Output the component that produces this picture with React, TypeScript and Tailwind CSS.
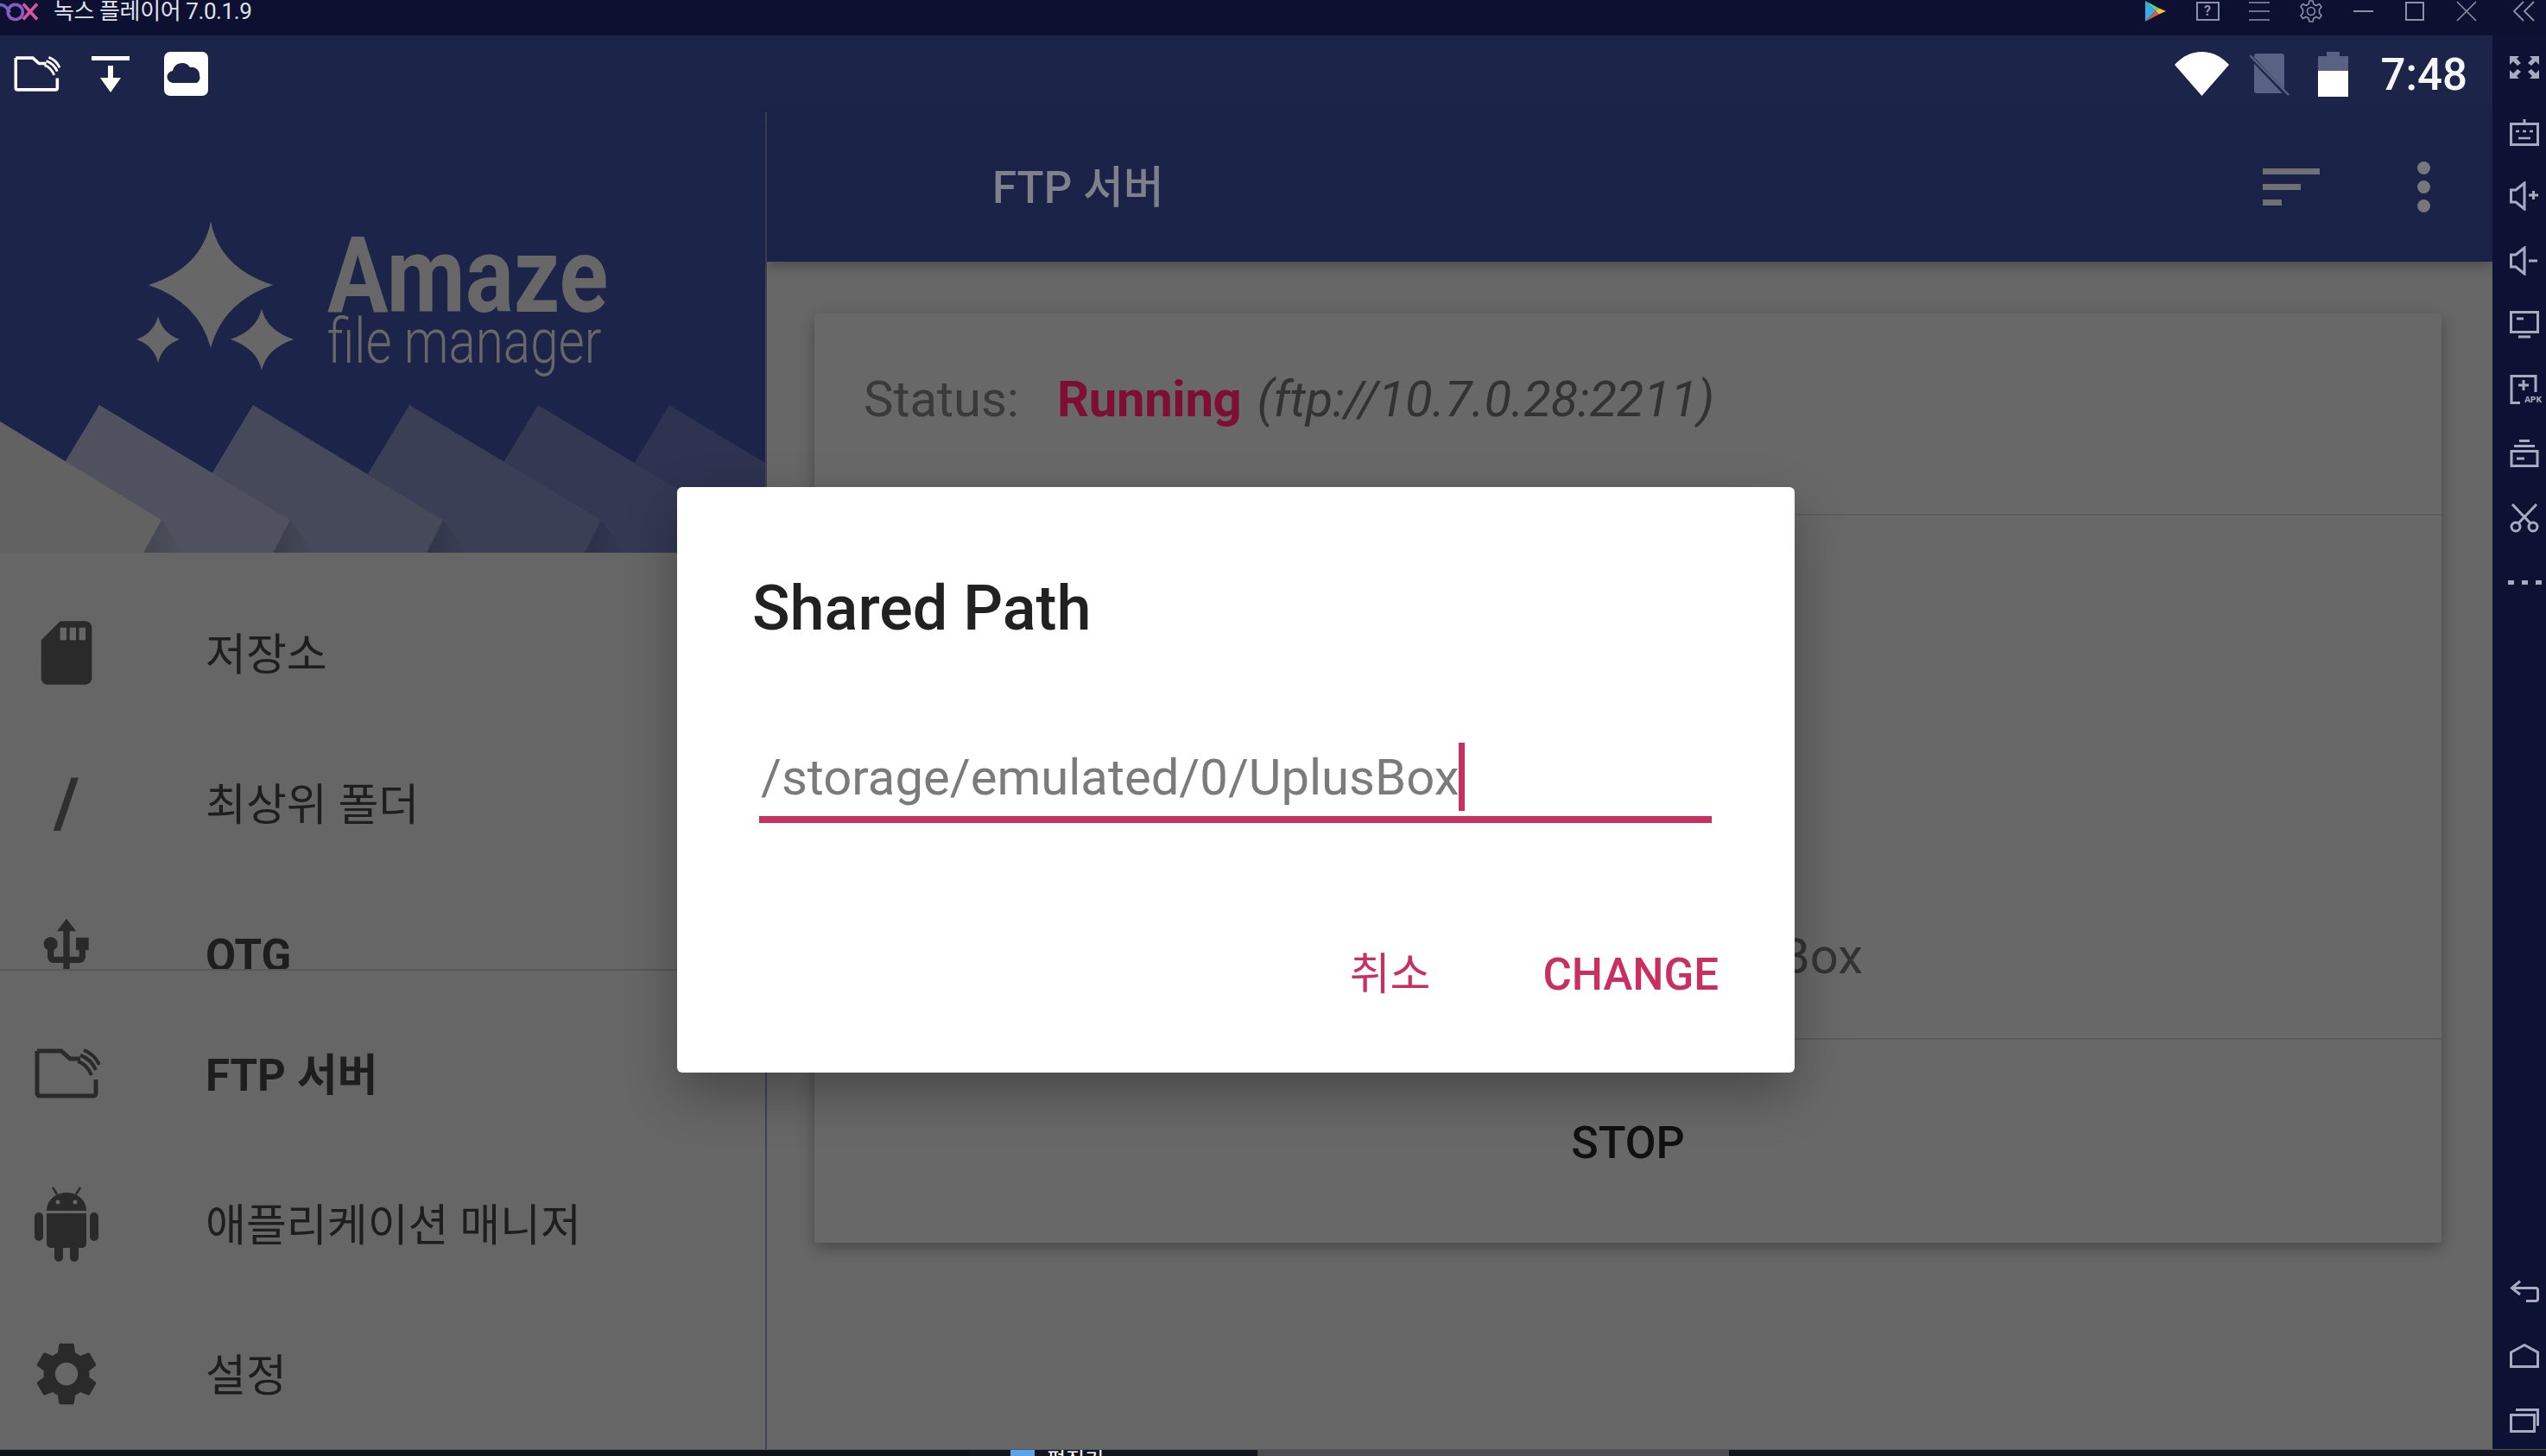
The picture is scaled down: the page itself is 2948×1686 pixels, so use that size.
import React from "react";
import { MdSdStorage, MdUsb, MdSettings } from "react-icons/md";

const FtpFolder = ({ cls, sw }: { cls: string; sw: number }) => (
  <svg viewBox="0 0 76 58" className={cls} fill="none" stroke="currentColor" strokeWidth={sw} strokeLinejoin="round" strokeLinecap="butt">
    <path d="M3 3 H31 L41 12 H53 M3 3 V52 a3 3 0 0 0 3 3 H68 a3 3 0 0 0 3 -3 V36" />
    <path d="M57 2 C65 5 71 10 75 19" strokeWidth={sw * 0.8} />
    <path d="M53 8 C62 11 67 16 71 25" strokeWidth={sw * 0.8} />
    <path d="M50 15 C57 17 62 22 66 31" strokeWidth={sw * 0.8} />
  </svg>
);

const Tb = ({ children }: { children: React.ReactNode }) => (
  <div className="w-[60px] h-full flex items-center justify-center text-[#8d90a6]">{children}</div>
);

const Side = ({ children }: { children: React.ReactNode }) => (
  <div className="h-[74.5px] flex items-center justify-center text-[#a8abbf]">{children}</div>
);

const Item = ({ icon, label, bold }: { icon: React.ReactNode; label: string; bold?: boolean }) => (
  <div className="h-[174px] flex items-center shrink-0">
    <div className="w-[154px] flex items-center justify-center text-[#2a2a2a]">{icon}</div>
    <div className={`ml-[84px] text-[#1e1e1e] text-[51px] leading-[60px] pt-[5px] ${bold ? "font-bold" : "font-normal"}`}>{label}</div>
  </div>
);

export default function App() {
  return (
    <div className="relative w-[2948px] h-[1686px] overflow-hidden flex flex-col bg-[#0c1133] font-['Roboto','Noto_Sans_CJK_KR',sans-serif]">
      {/* window title bar */}
      <div className="h-[41px] shrink-0 bg-[#0d1030] flex items-start justify-between">
        <div className="flex items-center h-[27px]">
          <svg viewBox="0 0 50 30" className="w-[50px] h-[27px]" fill="none" strokeWidth="4">
            <path d="M-6 7 C2 4 6 10 10 16" stroke="#6d5fc0" />
            <path d="M17 6 a9.5 9.5 0 1 1 -0.1 0" stroke="#8a5cc0" />
            <path d="M27 5 L45 25 M45 5 L27 25" stroke="#d9569e" />
          </svg>
          <span className="ml-[12px] text-[#dfe1ea] text-[26px] leading-[27px] whitespace-nowrap tracking-[-0.4px]">녹스 플레이어 7.0.1.9</span>
        </div>
        <div className="flex items-center h-[26px]">
          <Tb>
            <svg viewBox="0 0 26 26" className="w-[26px] h-[26px]">
              <path d="M1 1 L13 13 L1 25 Z" fill="#39a9e8" />
              <path d="M1 1 L17 9.5 L13 13 Z" fill="#5bd08a" />
              <path d="M1 25 L17 16.5 L13 13 Z" fill="#e2574c" />
              <path d="M17 9.5 L25 13 L17 16.5 L13 13 Z" fill="#f4c430" />
            </svg>
          </Tb>
          <Tb>
            <div className="w-[27px] h-[22px] border-2 border-[#8d90a6] flex items-center justify-center text-[16px] leading-none font-bold">?</div>
          </Tb>
          <Tb>
            <svg viewBox="0 0 24 24" className="w-[24px] h-[24px]" stroke="currentColor" strokeWidth="1.6"><path d="M0 2 H24 M0 12 H24 M0 22 H24" /></svg>
          </Tb>
          <Tb>
            <svg viewBox="0 0 26 26" className="w-[26px] h-[26px]" fill="none" stroke="currentColor" strokeWidth="1.6" strokeLinejoin="round">
              <path d="M11 1 H15 L16 5 L19 6.5 L22.5 4.5 L25 8 L22.5 11 V15 L25 18 L22.5 21.5 L19 19.5 L16 21 L15 25 H11 L10 21 L7 19.5 L3.5 21.5 L1 18 L3.5 15 V11 L1 8 L3.5 4.5 L7 6.5 L10 5 Z" />
              <circle cx="13" cy="13" r="4.5" />
            </svg>
          </Tb>
          <Tb><div className="w-[23px] h-[2px] bg-[#8d90a6]" /></Tb>
          <Tb><div className="w-[22px] h-[22px] border-2 border-[#8d90a6]" /></Tb>
          <Tb>
            <svg viewBox="0 0 24 24" className="w-[24px] h-[24px]" stroke="currentColor" strokeWidth="1.6"><path d="M1 1 L23 23 M23 1 L1 23" /></svg>
          </Tb>
          <div className="w-[62px] h-full flex items-center justify-center pl-[10px] text-[#8d90a6]">
            <svg viewBox="0 0 26 24" className="w-[26px] h-[24px]" fill="none" stroke="currentColor" strokeWidth="1.8"><path d="M13 1 L2 12 L13 23 M25 1 L14 12 L25 23" /></svg>
          </div>
        </div>
      </div>

      <div className="flex flex-1 min-h-0">
        {/* android screen */}
        <div className="w-[2886px] shrink-0 flex flex-col">
          {/* status bar */}
          <div className="h-[89px] shrink-0 bg-[#1c2449] flex items-center justify-between pl-[16px] pr-[29px]">
            <div className="flex items-center">
              <FtpFolder cls="w-[54px] h-[41px] text-white" sw={5} />
              <svg viewBox="0 0 44 42" className="ml-[36px] w-[44px] h-[42px] text-white" fill="currentColor">
                <path d="M0 0 H44 V5 H0 Z M19 11 H25 V25 H34 L22 42 L10 25 H19 Z" />
              </svg>
              <svg viewBox="0 0 51 51" className="ml-[40px] w-[51px] h-[51px]">
                <rect width="51" height="51" rx="7" fill="#fff" />
                <path d="M11 36 a7 7 0 0 1 -1 -14 a11 11 0 0 1 20 -4 a9 9 0 0 1 11 9 a8 8 0 0 1 -3 9 Z" fill="#1c2449" />
              </svg>
            </div>
            <div className="flex items-center">
              <svg viewBox="0 0 63 51" className="w-[63px] h-[51px]"><path d="M0 15 C18 -5 45 -5 63 15 L31.5 51 Z" fill="#fff" /></svg>
              <svg viewBox="0 0 46 50" className="ml-[24px] w-[46px] h-[50px]">
                <path d="M5 3 a3 3 0 0 1 3 -2 H37 a3 3 0 0 1 3 3 V44 a3 3 0 0 1 -3 3 H8 a3 3 0 0 1 -3 -3 Z" fill="#5a6283" />
                <path d="M1 5 L43 49" stroke="#1c2449" strokeWidth="5" />
                <path d="M0 3 L45 49" stroke="#5a6283" strokeWidth="2.5" />
              </svg>
              <svg viewBox="0 0 35 52" className="ml-[33px] w-[35px] h-[52px]">
                <path d="M10 0 H25 V5 H35 V22 H0 V5 H10 Z" fill="#5a6283" />
                <rect y="22" width="35" height="30" fill="#fff" />
              </svg>
              <span className="ml-[38px] text-[51px] leading-[60px] pt-[2px] font-medium text-[#f4f5f8]">7:48</span>
            </div>
          </div>

          <div className="flex flex-1 min-h-0">
            {/* navigation drawer */}
            <div className="w-[888px] shrink-0 flex flex-col bg-[#666666] border-r-2 border-[#3f4357]">
              <div className="relative h-[510px] shrink-0 bg-[#1c2549] overflow-hidden">
                <svg viewBox="0 0 886 171" className="absolute left-0 bottom-0 w-[886px] h-[171px]">
                  <defs>
                    <linearGradient id="fold" x1="0" x2="1" y1="0" y2="0">
                      <stop offset="0" stopColor="#000" stopOpacity="0.16" />
                      <stop offset="1" stopColor="#000" stopOpacity="0" />
                    </linearGradient>
                  </defs>
                  <path d="M775 0 L886 67 V171 H672 Z" fill="#2d3350" />
                  <path d="M844 133 L825 171 H875 Z" fill="url(#fold)" />
                  <path d="M623 0 L844 133 L825 171 H520 Z" fill="#333952" />
                  <path d="M696 133 L677 171 H725 Z" fill="url(#fold)" />
                  <path d="M474 0 L696 133 L677 171 H371 Z" fill="#3a3f55" />
                  <path d="M513 133 L494 171 H542 Z" fill="url(#fold)" />
                  <path d="M293 0 L513 133 L494 171 H190 Z" fill="#454959" />
                  <path d="M336 133 L316 171 H365 Z" fill="url(#fold)" />
                  <path d="M115 0 L336 133 L316 171 H12 Z" fill="#4f525e" />
                  <path d="M187 133 L166 171 H215 Z" fill="url(#fold)" />
                  <path d="M0 19 L187 133 L166 171 H0 Z" fill="#626263" />
                </svg>
                <div className="relative flex items-start pl-[150px] pt-[120px]">
                  <svg viewBox="0 0 195 185" className="w-[195px] h-[185px] shrink-0" fill="#676767">
                    <path d="M94 6 Q104 60 166 80 Q108 100 94 153 Q80 100 22 80 Q84 60 94 6 Z" />
                    <path d="M33 116 Q38 136 58 143 Q38 150 33 170 Q28 150 8 143 Q28 136 33 116 Z" />
                    <path d="M153 107 Q158 132 190 143 Q158 154 153 179 Q148 154 117 143 Q148 132 153 107 Z" />
                  </svg>
                  <div className="ml-[34px] pt-[24px] text-[#676767] whitespace-nowrap">
                    <div className="text-[122px] leading-[92px] font-bold origin-left scale-x-[0.86]">Amaze</div>
                    <div className="text-[72px] leading-[60px] font-light origin-left scale-x-[0.81]">file manager</div>
                  </div>
                </div>
              </div>
              <div className="h-[484px] shrink-0 overflow-hidden pt-[29px] border-b-2 border-[#585858]">
                <Item icon={<MdSdStorage size={88} />} label="저장소" />
                <Item icon={<span className="text-[80px] leading-[88px] font-bold text-[#2f2f2f]">/</span>} label="최상위 폴더" />
                <Item icon={<MdUsb size={88} />} label="OTG" bold />
              </div>
              <div className="flex-1 flex flex-col justify-end min-h-0">
                <Item icon={<FtpFolder cls="w-[76px] h-[58px] ml-[2px]" sw={5} />} label="FTP 서버" bold />
                <Item
                  icon={
                    <svg viewBox="0 0 74 87" className="w-[74px] h-[87px]" fill="currentColor">
                      <path d="M21 1 L26 9 M53 1 L48 9" stroke="currentColor" strokeWidth="2.5" />
                      <path d="M14 28 C14 16 24 7 37 7 C50 7 60 16 60 28 Z" />
                      <circle cx="27" cy="18" r="2.5" fill="#666666" />
                      <circle cx="47" cy="18" r="2.5" fill="#666666" />
                      <path d="M14 31 H60 V66 a5 5 0 0 1 -5 5 H19 a5 5 0 0 1 -5 -5 Z" />
                      <rect x="0" y="30" width="10" height="33" rx="5" />
                      <rect x="64" y="30" width="10" height="33" rx="5" />
                      <rect x="23" y="66" width="10" height="21" rx="5" />
                      <rect x="41" y="66" width="10" height="21" rx="5" />
                    </svg>
                  }
                  label="애플리케이션 매니저"
                />
                <Item icon={<MdSettings size={88} />} label="설정" />
              </div>
            </div>

            {/* main content */}
            <div className="flex-1 min-w-0 flex flex-col bg-[#676767]">
              <div className="h-[173px] shrink-0 bg-[#1a2248] flex items-center justify-between pl-[261px] pr-[72px] shadow-[0_6px_14px_rgba(0,0,0,0.25)]">
                <span className="text-[#7e808b] text-[51px] leading-[60px] pt-[2px] font-medium">FTP 서버</span>
                <div className="flex items-center">
                  <div className="flex flex-col gap-[11px]">
                    <div className="w-[66px] h-[7px] bg-[#6f7076]" />
                    <div className="w-[44px] h-[7px] bg-[#6f7076]" />
                    <div className="w-[22px] h-[7px] bg-[#6f7076]" />
                  </div>
                  <div className="ml-[113px] flex flex-col gap-[7px]">
                    <div className="w-[15px] h-[15px] rounded-full bg-[#76777b]" />
                    <div className="w-[15px] h-[15px] rounded-full bg-[#76777b]" />
                    <div className="w-[15px] h-[15px] rounded-full bg-[#76777b]" />
                  </div>
                </div>
              </div>
              <div className="ml-[55px] mt-[60px] w-[1884px] h-[1076px] flex flex-col bg-[#686868] rounded-[4px] shadow-[0_6px_18px_rgba(0,0,0,0.3)]">
                <div className="h-[234px] shrink-0 flex items-center pl-[57px] pb-[34px] border-b-2 border-[#5c5c5c] text-[58px] leading-[70px] whitespace-nowrap">
                  <span className="text-[#3a3a3a]">Status:</span>
                  <span className="ml-[44px] text-[#7e0e33] font-bold tracking-[-0.3px]">Running</span>
                  <span className="ml-[18px] text-[#333333] italic tracking-[-0.35px]">(ftp://10.7.0.28:2211)</span>
                </div>
                <div className="h-[607px] shrink-0 border-b-2 border-[#5c5c5c]">
                  <div className="w-[1214px] pt-[475px] text-right text-[#333333] text-[58px] leading-[70px] whitespace-nowrap">Box</div>
                </div>
                <div className="flex-1 flex items-center justify-center text-[#111111] text-[52px] leading-[60px] font-medium pt-[5px]">STOP</div>
              </div>
            </div>
          </div>
        </div>

        {/* emulator side toolbar */}
        <div className="flex-1 flex flex-col bg-[#0d1235] pl-[12px]">
          <Side>
            <svg viewBox="0 0 34 26" className="w-[34px] h-[26px]" fill="currentColor">
              <path d="M0 0 H11 L8 3 L13 8 L9 11 L4 6 L0 10 Z M34 0 H23 L26 3 L21 8 L25 11 L30 6 L34 10 Z M0 26 H11 L8 23 L13 18 L9 15 L4 20 L0 16 Z M34 26 H23 L26 23 L21 18 L25 15 L30 20 L34 16 Z" />
            </svg>
          </Side>
          <Side>
            <svg viewBox="0 0 34 32" className="w-[34px] h-[32px]" fill="none" stroke="currentColor" strokeWidth="3">
              <rect x="1.5" y="6.5" width="31" height="24" />
              <path d="M17 6 V1" />
              <path d="M7 15 H11 M15 15 H19 M23 15 H27 M10 23 H24" strokeWidth="2.5" />
            </svg>
          </Side>
          <Side>
            <svg viewBox="0 0 34 34" className="w-[34px] h-[34px]" fill="none" stroke="currentColor" strokeWidth="3">
              <path d="M1.5 10 H7 L17 2 V32 L7 24 H1.5 Z" />
              <path d="M22 16 H33 M27.5 11 V21" />
            </svg>
          </Side>
          <Side>
            <svg viewBox="0 0 34 34" className="w-[34px] h-[34px]" fill="none" stroke="currentColor" strokeWidth="3">
              <path d="M1.5 10 H7 L17 2 V32 L7 24 H1.5 Z" />
              <path d="M22 17 H32" />
            </svg>
          </Side>
          <Side>
            <svg viewBox="0 0 34 32" className="w-[34px] h-[32px]" fill="none" stroke="currentColor" strokeWidth="3">
              <rect x="1.5" y="1.5" width="31" height="23" />
              <path d="M8 9 H16 M10 30 H24" />
            </svg>
          </Side>
          <Side>
            <div className="relative w-[34px] h-[34px]">
              <svg viewBox="0 0 34 34" className="absolute inset-0 w-[34px] h-[34px]" fill="none" stroke="currentColor" strokeWidth="3">
                <path d="M12 32.5 H2 V1.5 H30 V20" />
                <path d="M10 12 H22 M16 6 V18" />
              </svg>
              <span className="absolute right-[-3px] bottom-[-1px] text-[11px] leading-[12px] font-bold font-['Liberation_Mono',monospace]">APK</span>
            </div>
          </Side>
          <Side>
            <svg viewBox="0 0 34 32" className="w-[34px] h-[32px]" fill="none" stroke="currentColor" strokeWidth="3">
              <rect x="2" y="13.5" width="30" height="17" />
              <path d="M11 1.5 H23 M5 7.5 H29 M8 22 H17" />
            </svg>
          </Side>
          <Side>
            <svg viewBox="0 0 34 34" className="w-[34px] h-[34px]" fill="none" stroke="currentColor" strokeWidth="3">
              <circle cx="7" cy="27" r="5" />
              <circle cx="27" cy="27" r="5" />
              <path d="M10 23 L31 1 M24 23 L3 1" />
            </svg>
          </Side>
          <Side>
            <div className="flex gap-[9px]">
              <div className="w-[7px] h-[5px] bg-[#a8abbf]" />
              <div className="w-[7px] h-[5px] bg-[#a8abbf]" />
              <div className="w-[7px] h-[5px] bg-[#a8abbf]" />
            </div>
          </Side>
          <div className="mt-auto flex flex-col gap-[9px] text-[#a8abbf]">
            <div className="h-[66px] flex items-center justify-center">
              <svg viewBox="0 0 34 26" className="w-[34px] h-[26px]" fill="none" stroke="currentColor" strokeWidth="3">
                <path d="M12 1.5 L2.5 9.5 L12 17 M3 9.5 H30 a2.5 2.5 0 0 1 2.5 2.5 V22 a2.5 2.5 0 0 1 -2.5 2.5 H19" />
              </svg>
            </div>
            <div className="h-[66px] flex items-center justify-center">
              <svg viewBox="0 0 34 28" className="w-[34px] h-[28px]" fill="none" stroke="currentColor" strokeWidth="3">
                <path d="M1.5 10 L17 1.5 L32.5 10 V26.5 H1.5 Z" />
              </svg>
            </div>
            <div className="h-[66px] flex items-center justify-center">
              <svg viewBox="0 0 34 28" className="w-[34px] h-[28px]" fill="none" stroke="currentColor" strokeWidth="3">
                <rect x="1.5" y="7.5" width="27" height="19" />
                <path d="M7 1.5 H32.5 V20" />
              </svg>
            </div>
          </div>
        </div>
      </div>

      {/* host task bar peeking out below */}
      <div className="h-[8px] shrink-0 flex bg-[#14141f] border-t border-[#50556e] overflow-hidden">
        <div className="w-[1124px] h-full bg-[#101018]" />
        <div className="w-[46px] h-full" />
        <div className="w-[28px] h-full bg-[#5aa5e8]" />
        <div className="ml-[14px] w-[90px] h-[7px] overflow-hidden text-white text-[24px] leading-[24px]">편집기</div>
        <div className="w-[154px] h-full" />
        <div className="w-[546px] h-full bg-[#4c4c50]" />
      </div>

      {/* dialog */}
      <div className="absolute left-[784px] top-[564px] w-[1294px] h-[678px] bg-white rounded-[6px] shadow-[0_24px_60px_rgba(0,0,0,0.3)] flex flex-col">
        <div className="pl-[87px] pt-[102px] text-[#212121] text-[72px] leading-[78px] font-medium">Shared Path</div>
        <div className="ml-[95px] w-[1103px] mt-[116px] h-[93px] flex flex-col">
          <div className="h-[85px] flex items-center pl-[2px] pb-[6px]">
            <span className="text-[#7b7b7b] text-[58px] leading-[70px] whitespace-nowrap">/storage/emulated/0/UplusBox</span>
            <span className="w-[7px] h-[79px] bg-[#c9305f]" />
          </div>
          <div className="h-[8px] bg-[#c9305f]" />
        </div>
        <div className="mt-auto mb-[83px] flex items-center justify-end pr-[88px]">
          <span className="text-[#c9305f] text-[51px] leading-[60px]">취소</span>
          <span className="ml-[130px] text-[#c9305f] text-[51px] leading-[60px] font-medium">CHANGE</span>
        </div>
      </div>
    </div>
  );
}
